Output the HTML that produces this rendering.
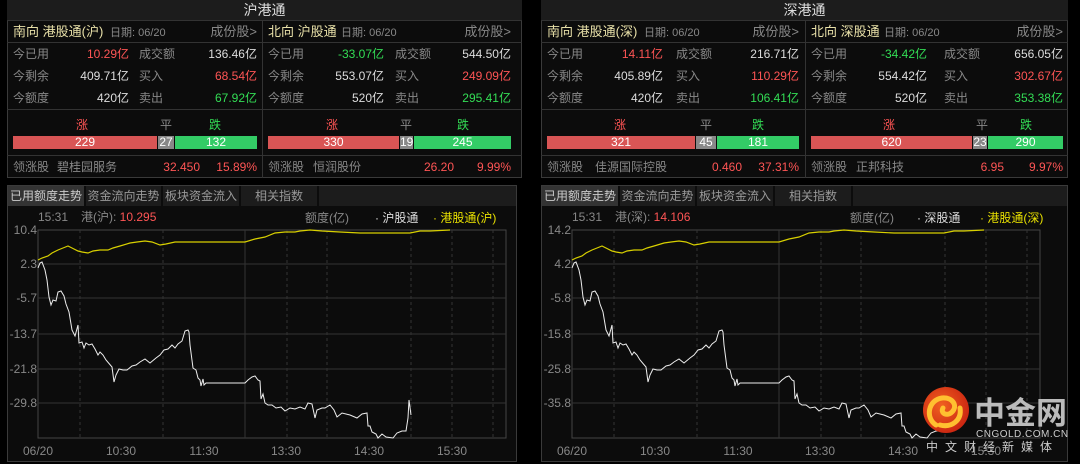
<!DOCTYPE html>
<html><head><meta charset="utf-8"><style>
*{margin:0;padding:0;box-sizing:border-box}
body{width:1080px;height:464px;background:#000;overflow:hidden;font-family:"Liberation Sans","Noto Sans CJK SC",sans-serif;font-size:12px;color:#aaa;position:relative}
.a{position:absolute;white-space:nowrap;line-height:14px}
.r{text-align:right}
.box{position:absolute;border:1px solid #3a3a3a;background:#0c0c0c}
.hl{position:absolute;height:1px;background:#333}
.vl{position:absolute;width:1px;background:#333}
.red{color:#ff5555}.grn{color:#33dd55}.wh{color:#ddd}.cr{color:#e8e0a8}.g{color:#888}
.bar{position:absolute;height:13px;color:#fff;text-align:center;line-height:13px;font-size:12px}
.tab{position:absolute;top:186px;height:20px;line-height:20px;text-align:center;color:#999;background:#1c1c1c;border-right:2px solid #0c0c0c}
</style></head><body>

<!-- LEFT TOP -->
<div class="box" style="left:7px;top:0;width:515px;height:178px"></div>
<div class="a" style="left:7px;top:0;width:515px;height:20px;background:#1c1c1c;text-align:center;color:#ddd;font-size:14px;line-height:20px">沪港通</div>
<div class="hl" style="left:7px;top:20px;width:515px"></div>
<div class="hl" style="left:7px;top:42px;width:515px"></div>
<div class="hl" style="left:7px;top:109px;width:515px"></div>
<div class="hl" style="left:7px;top:155px;width:515px"></div>
<div class="vl" style="left:262px;top:20px;height:158px"></div>
<div class="a cr" style="left:13px;top:25px;font-size:13px">南向 港股通(沪)</div>
<div class="a g" style="left:110px;top:26px;font-size:11px">日期: 06/20</div>
<div class="a g r" style="left:180px;top:25px;width:77px;font-size:13px">成份股&gt;</div>
<div class="a cr" style="left:268px;top:25px;font-size:13px">北向 沪股通</div>
<div class="a g" style="left:341px;top:26px;font-size:11px">日期: 06/20</div>
<div class="a g r" style="left:434px;top:25px;width:77px;font-size:13px">成份股&gt;</div>

<div class="a g" style="left:13px;top:47px">今已用</div><div class="a r red" style="left:58px;top:47px;width:71px">10.29亿</div>
<div class="a g" style="left:139px;top:47px">成交额</div><div class="a r wh" style="left:180px;top:47px;width:77px">136.46亿</div>
<div class="a g" style="left:13px;top:69px">今剩余</div><div class="a r wh" style="left:58px;top:69px;width:71px">409.71亿</div>
<div class="a g" style="left:139px;top:69px">买入</div><div class="a r red" style="left:180px;top:69px;width:77px">68.54亿</div>
<div class="a g" style="left:13px;top:91px">今额度</div><div class="a r wh" style="left:58px;top:91px;width:71px">420亿</div>
<div class="a g" style="left:139px;top:91px">卖出</div><div class="a r grn" style="left:180px;top:91px;width:77px">67.92亿</div>

<div class="a g" style="left:268px;top:47px">今已用</div><div class="a r grn" style="left:310px;top:47px;width:74px">-33.07亿</div>
<div class="a g" style="left:395px;top:47px">成交额</div><div class="a r wh" style="left:434px;top:47px;width:77px">544.50亿</div>
<div class="a g" style="left:268px;top:69px">今剩余</div><div class="a r wh" style="left:310px;top:69px;width:74px">553.07亿</div>
<div class="a g" style="left:395px;top:69px">买入</div><div class="a r red" style="left:434px;top:69px;width:77px">249.09亿</div>
<div class="a g" style="left:268px;top:91px">今额度</div><div class="a r wh" style="left:310px;top:91px;width:74px">520亿</div>
<div class="a g" style="left:395px;top:91px">卖出</div><div class="a r grn" style="left:434px;top:91px;width:77px">295.41亿</div>

<div class="a red" style="left:76px;top:118px">涨</div><div class="a g" style="left:160px;top:118px">平</div><div class="a grn" style="left:209px;top:118px">跌</div>
<div class="bar" style="left:13px;top:136px;width:144px;background:#d95555">229</div>
<div class="bar" style="left:158px;top:136px;width:16px;background:#888">27</div>
<div class="bar" style="left:175px;top:136px;width:82px;background:#33cc66">132</div>
<div class="a red" style="left:326px;top:118px">涨</div><div class="a g" style="left:400px;top:118px">平</div><div class="a grn" style="left:457px;top:118px">跌</div>
<div class="bar" style="left:268px;top:136px;width:131px;background:#d95555">330</div>
<div class="bar" style="left:400px;top:136px;width:13px;background:#888">19</div>
<div class="bar" style="left:414px;top:136px;width:97px;background:#33cc66">245</div>

<div class="a g" style="left:13px;top:160px">领涨股</div><div class="a g" style="left:57px;top:160px">碧桂园服务</div>
<div class="a r red" style="left:140px;top:160px;width:60px">32.450</div><div class="a r red" style="left:200px;top:160px;width:57px">15.89%</div>
<div class="a g" style="left:268px;top:160px">领涨股</div><div class="a g" style="left:313px;top:160px">恒润股份</div>
<div class="a r red" style="left:394px;top:160px;width:60px">26.20</div><div class="a r red" style="left:454px;top:160px;width:57px">9.99%</div>

<!-- RIGHT TOP -->
<div class="box" style="left:541px;top:0;width:527px;height:178px"></div>
<div class="a" style="left:541px;top:0;width:527px;height:20px;background:#1c1c1c;text-align:center;color:#ddd;font-size:14px;line-height:20px">深港通</div>
<div class="hl" style="left:541px;top:20px;width:527px"></div>
<div class="hl" style="left:541px;top:42px;width:527px"></div>
<div class="hl" style="left:541px;top:109px;width:527px"></div>
<div class="hl" style="left:541px;top:155px;width:527px"></div>
<div class="vl" style="left:805px;top:20px;height:158px"></div>
<div class="a cr" style="left:547px;top:25px;font-size:13px">南向 港股通(深)</div>
<div class="a g" style="left:644px;top:26px;font-size:11px">日期: 06/20</div>
<div class="a g r" style="left:722px;top:25px;width:77px;font-size:13px">成份股&gt;</div>
<div class="a cr" style="left:811px;top:25px;font-size:13px">北向 深股通</div>
<div class="a g" style="left:884px;top:26px;font-size:11px">日期: 06/20</div>
<div class="a g r" style="left:986px;top:25px;width:77px;font-size:13px">成份股&gt;</div>

<div class="a g" style="left:547px;top:47px">今已用</div><div class="a r red" style="left:592px;top:47px;width:71px">14.11亿</div>
<div class="a g" style="left:676px;top:47px">成交额</div><div class="a r wh" style="left:722px;top:47px;width:77px">216.71亿</div>
<div class="a g" style="left:547px;top:69px">今剩余</div><div class="a r wh" style="left:592px;top:69px;width:71px">405.89亿</div>
<div class="a g" style="left:676px;top:69px">买入</div><div class="a r red" style="left:722px;top:69px;width:77px">110.29亿</div>
<div class="a g" style="left:547px;top:91px">今额度</div><div class="a r wh" style="left:592px;top:91px;width:71px">420亿</div>
<div class="a g" style="left:676px;top:91px">卖出</div><div class="a r grn" style="left:722px;top:91px;width:77px">106.41亿</div>

<div class="a g" style="left:811px;top:47px">今已用</div><div class="a r grn" style="left:853px;top:47px;width:74px">-34.42亿</div>
<div class="a g" style="left:944px;top:47px">成交额</div><div class="a r wh" style="left:986px;top:47px;width:77px">656.05亿</div>
<div class="a g" style="left:811px;top:69px">今剩余</div><div class="a r wh" style="left:853px;top:69px;width:74px">554.42亿</div>
<div class="a g" style="left:944px;top:69px">买入</div><div class="a r red" style="left:986px;top:69px;width:77px">302.67亿</div>
<div class="a g" style="left:811px;top:91px">今额度</div><div class="a r wh" style="left:853px;top:91px;width:74px">520亿</div>
<div class="a g" style="left:944px;top:91px">卖出</div><div class="a r grn" style="left:986px;top:91px;width:77px">353.38亿</div>

<div class="a red" style="left:614px;top:118px">涨</div><div class="a g" style="left:700px;top:118px">平</div><div class="a grn" style="left:752px;top:118px">跌</div>
<div class="bar" style="left:547px;top:136px;width:148px;background:#d95555">321</div>
<div class="bar" style="left:696px;top:136px;width:20px;background:#888">45</div>
<div class="bar" style="left:717px;top:136px;width:82px;background:#33cc66">181</div>
<div class="a red" style="left:883px;top:118px">涨</div><div class="a g" style="left:976px;top:118px">平</div><div class="a grn" style="left:1020px;top:118px">跌</div>
<div class="bar" style="left:811px;top:136px;width:161px;background:#d95555">620</div>
<div class="bar" style="left:973px;top:136px;width:14px;background:#888">23</div>
<div class="bar" style="left:988px;top:136px;width:75px;background:#33cc66">290</div>

<div class="a g" style="left:547px;top:160px">领涨股</div><div class="a g" style="left:595px;top:160px">佳源国际控股</div>
<div class="a r red" style="left:682px;top:160px;width:60px">0.460</div><div class="a r red" style="left:742px;top:160px;width:57px">37.31%</div>
<div class="a g" style="left:811px;top:160px">领涨股</div><div class="a g" style="left:856px;top:160px">正邦科技</div>
<div class="a r red" style="left:944px;top:160px;width:60px">6.95</div><div class="a r red" style="left:1006px;top:160px;width:57px">9.97%</div>

<!-- LEFT CHART -->
<div class="box" style="left:7px;top:185px;width:510px;height:277px"></div>
<div class="a" style="left:8px;top:186px;width:508px;height:20px;background:#1c1c1c"></div>
<div class="tab" style="left:8px;width:78px;background:#333;color:#ccc">已用额度走势</div>
<div class="tab" style="left:86px;width:77px">资金流向走势</div>
<div class="tab" style="left:163px;width:78px">板块资金流入</div>
<div class="tab" style="left:241px;width:78px">相关指数</div>
<div class="a g" style="left:38px;top:210px">15:31</div>
<div class="a g" style="left:81px;top:210px">港(沪): <span class="red">10.295</span></div>
<div class="a g" style="left:305px;top:211px">额度(亿)</div>
<div class="a wh" style="left:375px;top:211px">· 沪股通</div>
<div class="a" style="left:433px;top:211px;color:#e8e000">· 港股通(沪)</div>

<!-- RIGHT CHART -->
<div class="box" style="left:541px;top:185px;width:527px;height:277px"></div>
<div class="a" style="left:542px;top:186px;width:525px;height:20px;background:#1c1c1c"></div>
<div class="tab" style="left:542px;width:78px;background:#333;color:#ccc">已用额度走势</div>
<div class="tab" style="left:620px;width:77px">资金流向走势</div>
<div class="tab" style="left:697px;width:78px">板块资金流入</div>
<div class="tab" style="left:775px;width:78px">相关指数</div>
<div class="a g" style="left:572px;top:210px">15:31</div>
<div class="a g" style="left:615px;top:210px">港(深): <span class="red">14.106</span></div>
<div class="a g" style="left:850px;top:211px">额度(亿)</div>
<div class="a wh" style="left:917px;top:211px">· 深股通</div>
<div class="a" style="left:980px;top:211px;color:#e8e000">· 港股通(深)</div>

<svg width="1080" height="464" style="position:absolute;left:0;top:0" font-family="Liberation Sans, sans-serif" font-size="12">
<defs>
<g id="grid">
<rect x="38" y="230" width="468" height="208" fill="none" stroke="#444"/>
<g stroke="#333"><line x1="38" y1="264" x2="506" y2="264"/><line x1="38" y1="298" x2="506" y2="298"/><line x1="38" y1="334" x2="506" y2="334"/><line x1="38" y1="369" x2="506" y2="369"/><line x1="38" y1="403" x2="506" y2="403"/><line x1="245" y1="230" x2="245" y2="438"/></g>
<g stroke="#333" stroke-dasharray="3,3"><line x1="80" y1="230" x2="80" y2="438"/><line x1="163" y1="230" x2="163" y2="438"/><line x1="287" y1="230" x2="287" y2="438"/><line x1="327" y1="230" x2="327" y2="438"/><line x1="411" y1="230" x2="411" y2="438"/><line x1="452" y1="230" x2="452" y2="438"/><line x1="493" y1="230" x2="493" y2="438"/></g>
<g fill="#888" text-anchor="middle"><text x="38" y="455">06/20</text><text x="121" y="455">10:30</text><text x="204" y="455">11:30</text><text x="286" y="455">13:30</text><text x="369" y="455">14:30</text><text x="452" y="455">15:30</text></g>
<polyline fill="none" stroke="#d8d000" stroke-width="1.2" points="38,260 42,258 48,256 52,253 58,250 63,248 68,246 72,248 78,251 82,252 88,253 93,251 100,250 108,250 113,248 120,246 130,243 137,242 145,241 152,242 160,245 166,244 175,242 185,242 197,242 220,242 245,242 255,239 265,237 275,233 285,232 295,232 300,231 310,230 322,231 340,232 360,233 380,233 395,233 410,233 420,231 430,231 450,230"/>
<polyline fill="none" stroke="#eee" stroke-width="1" points="38,268 40,263 42,262 45,270 47,280 49,297 51,305 53,300 56,301 58,292 61,291 64,296 66,304 69,312 72,330 75,336 78,325 79,343 82,342 84,348 86,343 89,345 92,344 95,349 98,355 100,352 103,355 106,360 112,367 114,382 116,375 119,369 123,370 127,370 132,366 136,365 140,362 145,359 150,363 156,358 160,355 164,350 168,349 172,345 175,348 178,344 182,341 185,331 188,330 189,332 190,345 193,368 196,370 198,378 200,380 201,386 203,379 204,385 206,383 245,383 248,380 252,377 255,376 258,380 260,381 261,399 263,394 265,403 268,405 272,405 276,408 281,407 285,411 290,408 295,409 300,407 305,409 308,403 312,404 315,418 317,410 322,408 325,408 330,405 334,410 337,417 342,413 350,415 357,418 362,414 367,413 368,426 370,426 372,432 376,434 378,438 382,434 386,437 393,438 397,433 402,431 406,431 408,418 409,400 411,415"/>
</g>
</defs>
<use href="#grid"/>
<g fill="#888" text-anchor="end"><text x="37" y="234">10.4</text><text x="37" y="268">2.3</text><text x="37" y="302">-5.7</text><text x="37" y="338">-13.7</text><text x="37" y="373">-21.8</text><text x="37" y="407">-29.8</text></g>
<g transform="translate(534,0)"><use href="#grid"/>
<g fill="#888" text-anchor="end"><text x="37" y="234">14.2</text><text x="37" y="268">4.2</text><text x="37" y="302">-5.8</text><text x="37" y="338">-15.8</text><text x="37" y="373">-25.8</text><text x="37" y="407">-35.8</text></g></g>
<!-- logo -->
<defs><radialGradient id="lg" cx="0.4" cy="0.4" r="0.7"><stop offset="0" stop-color="#f06020"/><stop offset="1" stop-color="#c82010"/></radialGradient></defs>
<circle cx="946" cy="410" r="23" fill="url(#lg)"/>
<path d="M936,425 C925,418 928,400 942,398 C953,397 958,406 952,412 C947,417 940,413 943,408 M940,425 C952,428 962,420 960,408" fill="none" stroke="#ffc030" stroke-width="5" stroke-linecap="round"/>
<text x="974" y="424" fill="#bbb" font-size="31" font-weight="bold" font-family="Noto Sans CJK SC, sans-serif">中金网</text>
<text x="976" y="437" fill="#ccc" font-size="10" letter-spacing="0.5">CNGOLD.COM.CN</text>
<text x="926" y="451" fill="#ccc" font-size="12" letter-spacing="7" font-family="Noto Sans CJK SC, sans-serif">中文财经新媒体</text>
</svg>
</body></html>
